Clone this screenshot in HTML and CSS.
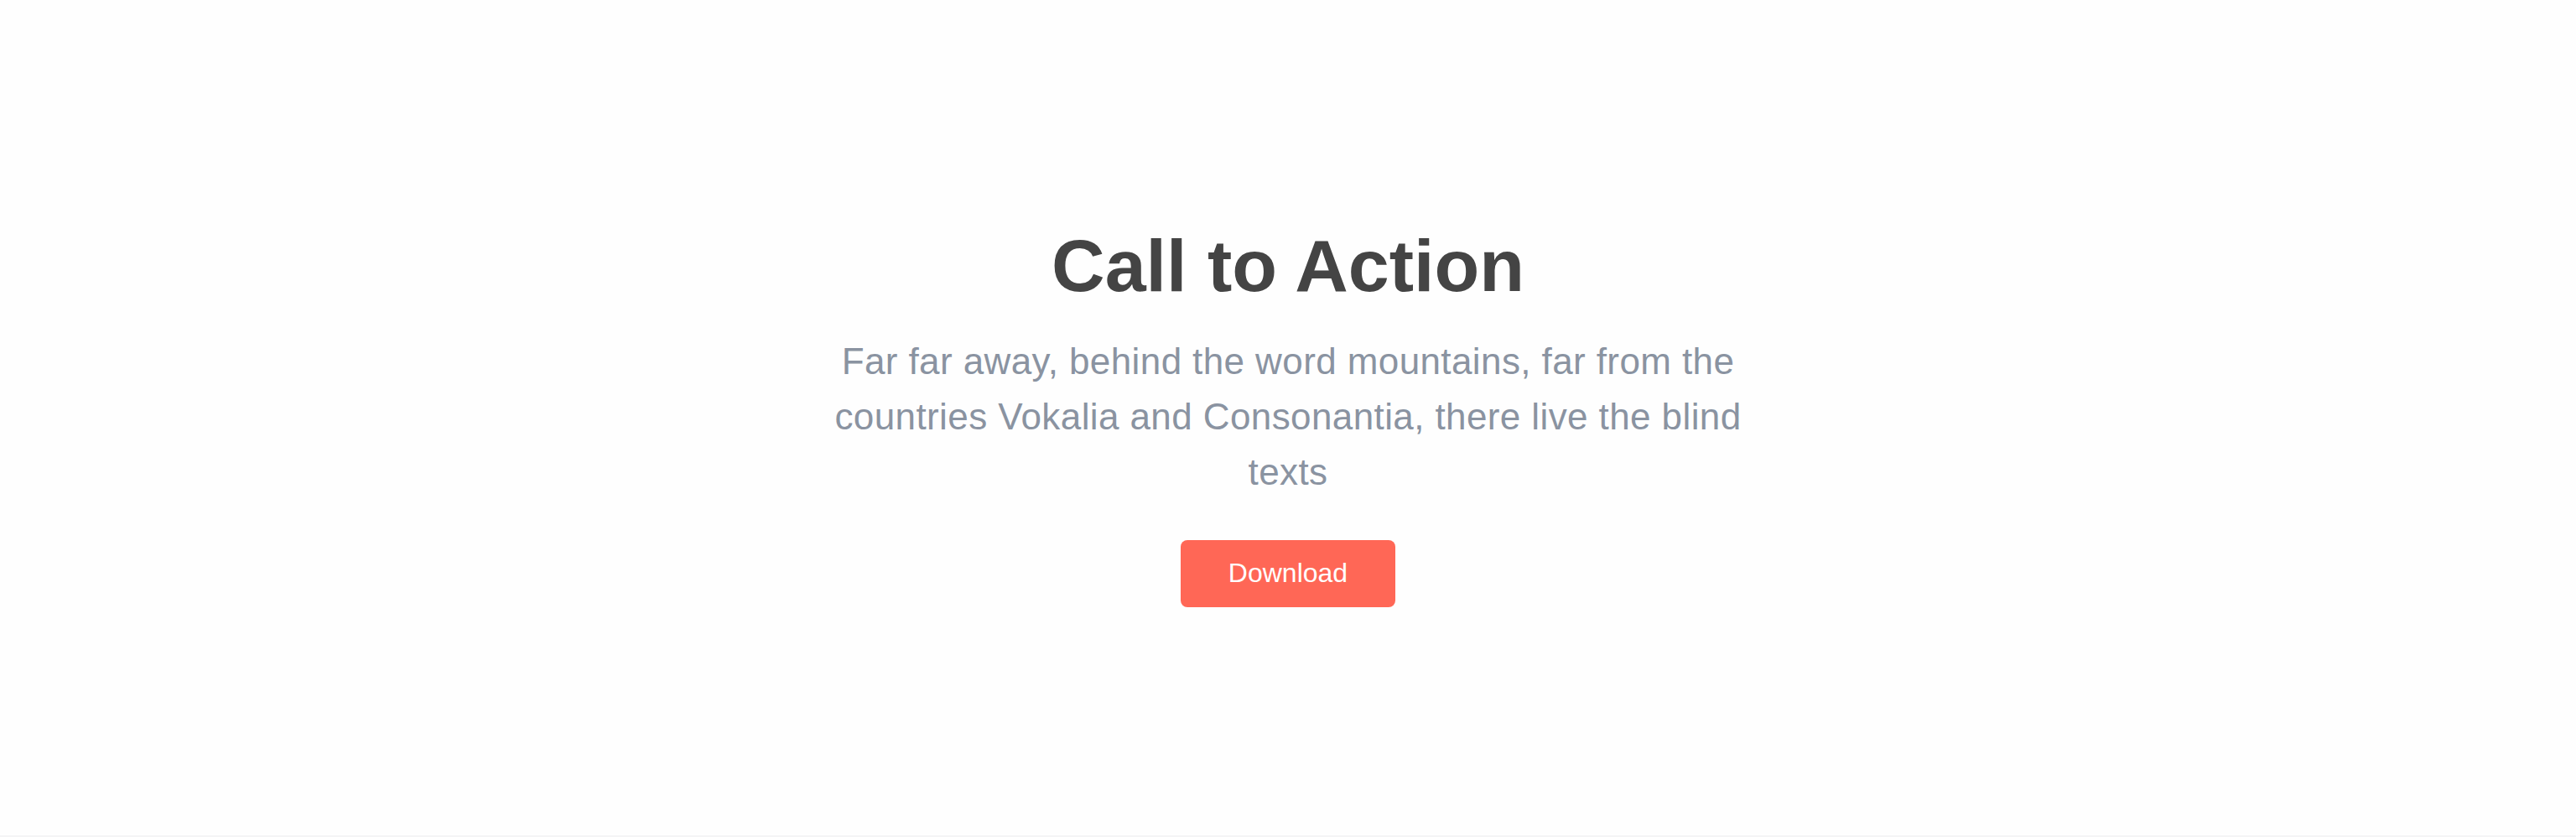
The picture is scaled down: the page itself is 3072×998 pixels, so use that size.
FILE: index.html
```html
<!DOCTYPE html>
<html lang="en">
<head>
<meta charset="utf-8">
<title>Call to Action</title>
<link rel="stylesheet" href="styles.css">
</head>
<body>
<section class="cta">
  <div class="cta-inner">
    <h1 class="cta-title">Call to Action</h1>
    <p class="cta-text">Far far away, behind the word mountains, far from the countries Vokalia and Consonantia, there live the blind texts</p>
    <a class="cta-button" href="#">Download</a>
  </div>
</section>
</body>
</html>
```
FILE: styles.css
```css
html, body {
  margin: 0;
  padding: 0;
  background: #ffffff;
}
body {
  font-family: "Liberation Sans", Arial, Helvetica, sans-serif;
}
.cta {
  box-sizing: border-box;
  height: 998px;
  padding: 264px 0 0;
  border-bottom: 2px solid #f4f4f5;
  background: #fefefe;
}
.cta-inner {
  display: flex;
  flex-direction: column;
  align-items: center;
  text-align: center;
}
.cta-title {
  margin: 0;
  font-size: 88px;
  line-height: 106px;
  font-weight: 700;
  color: #444444;
}
.cta-text {
  margin: 28px 0 0;
  max-width: 1130px;
  font-size: 44px;
  line-height: 66px;
  letter-spacing: 0.4px;
  color: #8a93a1;
}
.cta-button {
  margin-top: 48px;
  display: inline-block;
  padding: 15px 57px 17px;
  font-size: 32px;
  line-height: 48px;
  color: #ffffff;
  background: #ff6756;
  border-radius: 8px;
  text-decoration: none;
}
```
